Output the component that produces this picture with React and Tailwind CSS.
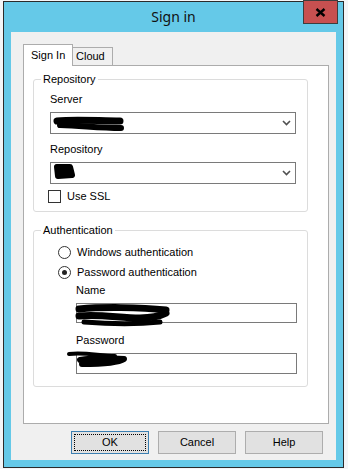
import React from 'react';

const font = { fontFamily: '"Liberation Sans", Arial, sans-serif' };

function Chevron() {
  return (
    <svg width="9" height="6" viewBox="0 0 9 6" className="mr-[4px]">
      <path d="M1 1 L4.5 4.5 L8 1" stroke="#505050" strokeWidth="1.6" fill="none" />
    </svg>
  );
}

function Combo() {
  return (
    <div className="w-[246px] h-[22px] border border-[#7a7a7a] bg-white flex items-center justify-end">
      <Chevron />
    </div>
  );
}

function Radio({ checked, label }) {
  return (
    <div className="h-[20px] flex items-center pl-[24px]">
      <div className="w-[13px] h-[13px] rounded-full border border-[#333] bg-white flex items-center justify-center">
        {checked && <div className="w-[5px] h-[5px] rounded-full bg-[#222]" />}
      </div>
      <span className="ml-[6px] text-[11px] text-black">{label}</span>
    </div>
  );
}

function Group({ label, height, children }) {
  return (
    <div className={`relative w-[275px] border border-[#dcdcdc] rounded-[3px] ${height}`}>
      <span className="absolute top-[-8px] left-[7px] bg-white px-[2px] text-[11px] leading-[14px] text-black">{label}</span>
      {children}
    </div>
  );
}

function Button({ children, focused }) {
  return (
    <button
      className={`w-[78px] h-[23px] bg-[#e1e1e1] text-[11px] text-black flex items-center justify-center border ${focused ? 'border-[#3c7fb1]' : 'border-[#adadad]'}`}
    >
      <span className={`flex items-center justify-center ${focused ? 'w-[72px] h-[17px] border border-dotted border-black' : ''}`}>
        {children}
      </span>
    </button>
  );
}

export default function App() {
  return (
    <div className="relative w-[348px] h-[469px] bg-[#f4f5f7] overflow-hidden" style={font}>
      <div className="relative ml-[3px] mt-[1px] w-[341px] h-[467px] border border-[#2b2b2b] bg-[#65c9e8] flex flex-col">
        {/* title bar */}
        <div className="h-[30px] flex items-center justify-center">
          <span className="text-[14px] text-[#111] mt-[-1px]" style={{ fontFamily: '"Noto Sans", "Open Sans", sans-serif' }}>Sign in</span>
        </div>
        <div className="absolute top-[-2px] right-[5px] w-[35px] h-[24px] bg-[#c75050] border border-[#3d3d3d] flex items-center justify-center">
          <svg width="11" height="9" viewBox="0 0 11 9">
            <path d="M1.5 1 L9.5 8 M9.5 1 L1.5 8" stroke="#000" strokeWidth="2.4" />
          </svg>
        </div>

        {/* client area */}
        <div className="mx-[7px] h-[428px] bg-[#f0f0f0] flex flex-col pt-[12px]">
          {/* tabs */}
          <div className="ml-[12px] h-[21px] flex items-end relative z-10">
            <div className="w-[50px] h-[22px] mb-[-1px] bg-white border border-b-0 border-[#acacac] text-[11px] text-black flex items-center pl-[7px]">
              Sign In
            </div>
            <div className="w-[40px] h-[18px] bg-[#f0f0f0] border border-l-0 border-b-0 border-[#acacac] text-[11px] text-black flex items-center pl-[3px]">
              Cloud
            </div>
          </div>

          {/* panel */}
          <div className="ml-[12px] w-[306px] h-[359px] bg-white border border-[#acacac] pt-[13px] pl-[9px]">
            <Group label="Repository" height="h-[133px]">
              <div className="pl-[16px] pt-[12px] flex flex-col">
                <div className="h-[14px] flex items-center text-[11px] text-black">Server</div>
                <div className="mt-[6px]"><Combo /></div>
                <div className="mt-[8px] h-[14px] flex items-center text-[11px] text-black">Repository</div>
                <div className="mt-[6px]"><Combo /></div>
              </div>
              <div className="mt-[6px] pl-[14px] h-[13px] flex items-center">
                <div className="w-[13px] h-[13px] border border-[#333] bg-white" />
                <span className="ml-[6px] text-[11px] text-black">Use SSL</span>
              </div>
            </Group>

            <div className="mt-[18px]">
              <Group label="Authentication" height="h-[157px]">
                <div className="pt-[11px] flex flex-col">
                  <Radio label="Windows authentication" />
                  <Radio checked label="Password authentication" />
                  <div className="pl-[42px] flex flex-col">
                    <div className="mt-[1px] h-[14px] flex items-center text-[11px] text-black">Name</div>
                    <div className="mt-[6px] w-[221px] h-[20px] border border-[#7a7a7a] bg-white" />
                    <div className="mt-[10px] h-[14px] flex items-center text-[11px] text-black">Password</div>
                    <div className="mt-[6px] w-[221px] h-[21px] border border-[#7a7a7a] bg-white" />
                  </div>
                </div>
              </Group>
            </div>
          </div>

          {/* buttons */}
          <div className="mt-[7px] flex justify-end gap-[9px] pr-[13px]">
            <Button focused>OK</Button>
            <Button>Cancel</Button>
            <Button>Help</Button>
          </div>
        </div>
      </div>

      {/* redaction scribbles */}
      <svg className="absolute inset-0 pointer-events-none" width="348" height="469" viewBox="0 0 348 469">
        <g stroke="#000" strokeLinecap="round" strokeLinejoin="round" fill="none">
          <path d="M57 121 C75 119 100 121 120 121" strokeWidth="7" />
          <path d="M60 125 C85 126 100 128 121 128" strokeWidth="6" />
          <path d="M57 167 L70 167 L72 175 L58 176 Z" strokeWidth="6" fill="#000" />
          <path d="M79 309 C100 307 140 307 166 310" strokeWidth="7" />
          <path d="M79 316 C100 314 120 318 140 318 C150 318 160 316 166 313" strokeWidth="7" />
          <path d="M84 322 C110 324 140 324 160 322" strokeWidth="5" />
          <path d="M69 354 C85 352 100 356 115 356" strokeWidth="4" />
          <path d="M80 360 C95 357 110 358 124 359 C118 363 100 364 82 364" strokeWidth="6" />
        </g>
      </svg>
    </div>
  );
}
